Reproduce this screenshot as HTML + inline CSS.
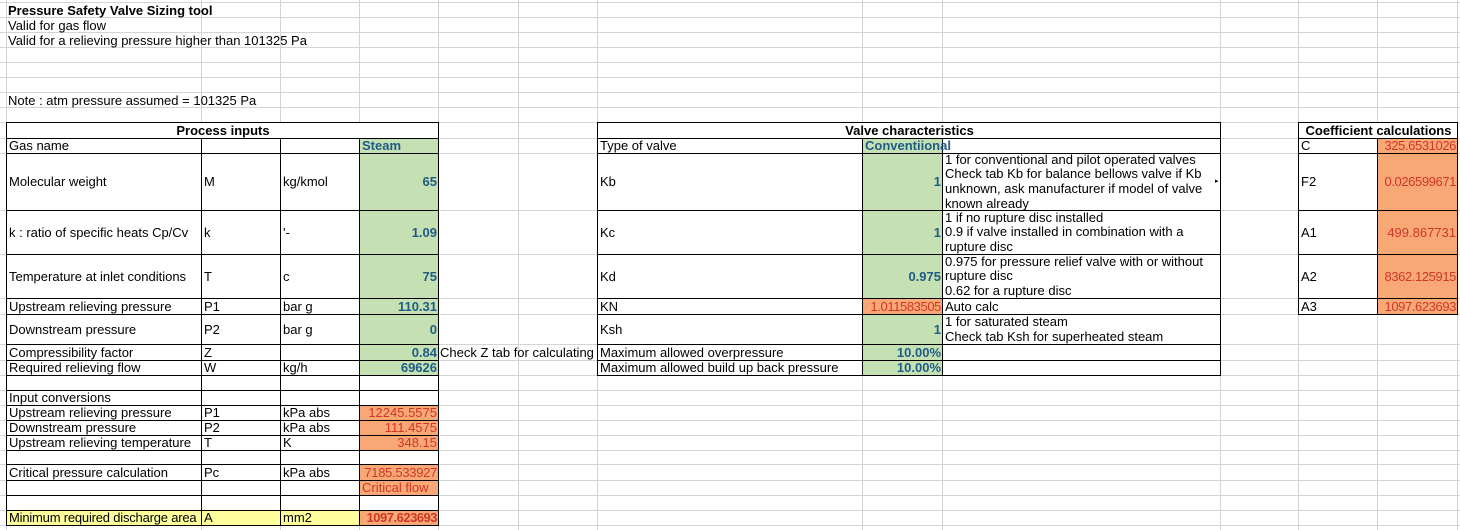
<!DOCTYPE html>
<html><head><meta charset="utf-8"><style>
*{margin:0;padding:0}
body{width:1460px;height:530px;background:#fff;position:relative;overflow:hidden;font-family:"Liberation Sans",Arial,sans-serif;font-size:13px;color:#000}
.v{position:absolute;top:0;height:530px;width:1px;background:#d4d4d4}
.h{position:absolute;left:0;width:1460px;height:1px;background:#d4d4d4}
.c{position:absolute;box-sizing:border-box;border:1px solid #000;background:#fff;display:flex;align-items:center;padding:0 1px 0 2px;white-space:nowrap;line-height:14px;overflow:hidden}
.r{justify-content:flex-end}
.m{justify-content:center;font-weight:bold}
.g{background:#c5e0b3;color:#1f5c86;font-weight:bold}
.o{background:#f7a874;color:#d0362a}
.y{background:#ffff9e}
.t{position:absolute;left:8px;white-space:nowrap;line-height:15px}
.w{line-height:14.6px}
</style></head><body>
<div class="v" style="left:6px"></div><div class="v" style="left:201px"></div><div class="v" style="left:280px"></div><div class="v" style="left:359px"></div><div class="v" style="left:438px"></div><div class="v" style="left:518px"></div><div class="v" style="left:597px"></div><div class="v" style="left:862px"></div><div class="v" style="left:942px"></div><div class="v" style="left:1220px"></div><div class="v" style="left:1298px"></div><div class="v" style="left:1377px"></div><div class="v" style="left:1457px"></div>
<div class="h" style="top:2px"></div><div class="h" style="top:17px"></div><div class="h" style="top:32px"></div><div class="h" style="top:47px"></div><div class="h" style="top:62px"></div><div class="h" style="top:77px"></div><div class="h" style="top:92px"></div><div class="h" style="top:107px"></div><div class="h" style="top:122px"></div><div class="h" style="top:138px"></div><div class="h" style="top:153px"></div><div class="h" style="top:210px"></div><div class="h" style="top:254px"></div><div class="h" style="top:298px"></div><div class="h" style="top:314px"></div><div class="h" style="top:344px"></div><div class="h" style="top:360px"></div><div class="h" style="top:375px"></div><div class="h" style="top:390px"></div><div class="h" style="top:405px"></div><div class="h" style="top:420px"></div><div class="h" style="top:435px"></div><div class="h" style="top:450px"></div><div class="h" style="top:464px"></div><div class="h" style="top:480px"></div><div class="h" style="top:495px"></div><div class="h" style="top:510px"></div><div class="h" style="top:525px"></div>

<div class="t" style="top:3px;font-weight:bold">Pressure Safety Valve Sizing tool</div>
<div class="t" style="top:18px">Valid for gas flow</div>
<div class="t" style="top:33px">Valid for a relieving pressure higher than 101325 Pa</div>
<div class="t" style="top:93px">Note : atm pressure assumed = 101325 Pa</div>
<div class="t" style="top:345px;left:440px;z-index:0">Check Z tab for calculating</div>

<!-- Process inputs -->
<div class="c m" style="left:6px;top:122px;width:433px;height:17px">Process inputs</div>
<div class="c" style="left:6px;top:138px;width:196px;height:16px">Gas name</div><div class="c" style="left:201px;top:138px;width:80px;height:16px"></div><div class="c" style="left:280px;top:138px;width:80px;height:16px"></div><div class="c g" style="left:359px;top:138px;width:80px;height:16px">Steam</div>
<div class="c" style="left:6px;top:153px;width:196px;height:58px">Molecular weight</div><div class="c" style="left:201px;top:153px;width:80px;height:58px">M</div><div class="c" style="left:280px;top:153px;width:80px;height:58px">kg/kmol</div><div class="c g r" style="left:359px;top:153px;width:80px;height:58px">65</div>
<div class="c" style="left:6px;top:210px;width:196px;height:45px">k : ratio of specific heats Cp/Cv</div><div class="c" style="left:201px;top:210px;width:80px;height:45px">k</div><div class="c" style="left:280px;top:210px;width:80px;height:45px">'-</div><div class="c g r" style="left:359px;top:210px;width:80px;height:45px">1.09</div>
<div class="c" style="left:6px;top:254px;width:196px;height:45px">Temperature at inlet conditions</div><div class="c" style="left:201px;top:254px;width:80px;height:45px">T</div><div class="c" style="left:280px;top:254px;width:80px;height:45px">c</div><div class="c g r" style="left:359px;top:254px;width:80px;height:45px">75</div>
<div class="c" style="left:6px;top:298px;width:196px;height:17px">Upstream relieving pressure</div><div class="c" style="left:201px;top:298px;width:80px;height:17px">P1</div><div class="c" style="left:280px;top:298px;width:80px;height:17px">bar g</div><div class="c g r" style="left:359px;top:298px;width:80px;height:17px">110.31</div>
<div class="c" style="left:6px;top:314px;width:196px;height:31px">Downstream pressure</div><div class="c" style="left:201px;top:314px;width:80px;height:31px">P2</div><div class="c" style="left:280px;top:314px;width:80px;height:31px">bar g</div><div class="c g r" style="left:359px;top:314px;width:80px;height:31px">0</div>
<div class="c" style="left:6px;top:344px;width:196px;height:17px">Compressibility factor</div><div class="c" style="left:201px;top:344px;width:80px;height:17px">Z</div><div class="c" style="left:280px;top:344px;width:80px;height:17px"></div><div class="c g r" style="left:359px;top:344px;width:80px;height:17px">0.84</div>
<div class="c" style="left:6px;top:360px;width:196px;height:16px">Required relieving flow</div><div class="c" style="left:201px;top:360px;width:80px;height:16px">W</div><div class="c" style="left:280px;top:360px;width:80px;height:16px">kg/h</div><div class="c g r" style="left:359px;top:360px;width:80px;height:16px">69626</div>
<div class="c" style="left:6px;top:375px;width:196px;height:16px"></div><div class="c" style="left:201px;top:375px;width:80px;height:16px"></div><div class="c" style="left:280px;top:375px;width:80px;height:16px"></div><div class="c" style="left:359px;top:375px;width:80px;height:16px"></div>
<div class="c" style="left:6px;top:390px;width:196px;height:16px">Input conversions</div><div class="c" style="left:201px;top:390px;width:80px;height:16px"></div><div class="c" style="left:280px;top:390px;width:80px;height:16px"></div><div class="c" style="left:359px;top:390px;width:80px;height:16px"></div>
<div class="c" style="left:6px;top:405px;width:196px;height:16px">Upstream relieving pressure</div><div class="c" style="left:201px;top:405px;width:80px;height:16px">P1</div><div class="c" style="left:280px;top:405px;width:80px;height:16px">kPa abs</div><div class="c o r" style="left:359px;top:405px;width:80px;height:16px">12245.5575</div>
<div class="c" style="left:6px;top:420px;width:196px;height:16px">Downstream pressure</div><div class="c" style="left:201px;top:420px;width:80px;height:16px">P2</div><div class="c" style="left:280px;top:420px;width:80px;height:16px">kPa abs</div><div class="c o r" style="left:359px;top:420px;width:80px;height:16px">111.4575</div>
<div class="c" style="left:6px;top:435px;width:196px;height:16px">Upstream relieving temperature</div><div class="c" style="left:201px;top:435px;width:80px;height:16px">T</div><div class="c" style="left:280px;top:435px;width:80px;height:16px">K</div><div class="c o r" style="left:359px;top:435px;width:80px;height:16px">348.15</div>
<div class="c" style="left:6px;top:450px;width:196px;height:15px"></div><div class="c" style="left:201px;top:450px;width:80px;height:15px"></div><div class="c" style="left:280px;top:450px;width:80px;height:15px"></div><div class="c" style="left:359px;top:450px;width:80px;height:15px"></div>
<div class="c" style="left:6px;top:464px;width:196px;height:17px">Critical pressure calculation</div><div class="c" style="left:201px;top:464px;width:80px;height:17px">Pc</div><div class="c" style="left:280px;top:464px;width:80px;height:17px">kPa abs</div><div class="c o r" style="left:359px;top:464px;width:80px;height:17px;letter-spacing:-0.3px">7185.533927</div>
<div class="c" style="left:6px;top:480px;width:196px;height:16px"></div><div class="c" style="left:201px;top:480px;width:80px;height:16px"></div><div class="c" style="left:280px;top:480px;width:80px;height:16px"></div><div class="c o" style="left:359px;top:480px;width:80px;height:16px">Critical flow</div>
<div class="c" style="left:6px;top:495px;width:196px;height:16px"></div><div class="c" style="left:201px;top:495px;width:80px;height:16px"></div><div class="c" style="left:280px;top:495px;width:80px;height:16px"></div><div class="c" style="left:359px;top:495px;width:80px;height:16px"></div>
<div class="c y" style="left:6px;top:510px;width:196px;height:16px;letter-spacing:-0.2px">Minimum required discharge area</div><div class="c y" style="left:201px;top:510px;width:80px;height:16px">A</div><div class="c y" style="left:280px;top:510px;width:80px;height:16px">mm2</div><div class="c o r" style="left:359px;top:510px;width:80px;height:16px;font-weight:bold;letter-spacing:-0.5px">1097.623693</div>

<!-- Valve characteristics -->
<div class="c m" style="left:597px;top:122px;width:624px;height:17px">Valve characteristics</div>
<div class="c" style="left:597px;top:138px;width:266px;height:16px">Type of valve</div><div class="c" style="left:942px;top:138px;width:279px;height:16px"></div><div class="c g" style="left:862px;top:138px;width:81px;height:16px;overflow:visible;z-index:2">Conventiional</div>
<div class="c" style="left:597px;top:153px;width:266px;height:58px">Kb</div><div class="c g r" style="left:862px;top:153px;width:81px;height:58px">1</div><div class="c w" style="left:942px;top:153px;width:279px;height:58px">1 for conventional and pilot operated valves<br>Check tab Kb for balance bellows valve if Kb<br>unknown, ask manufacturer if model of valve<br>known already</div>
<div class="c" style="left:597px;top:210px;width:266px;height:45px">Kc</div><div class="c g r" style="left:862px;top:210px;width:81px;height:45px">1</div><div class="c w" style="left:942px;top:210px;width:279px;height:45px">1 if no rupture disc installed<br>0.9 if valve installed in combination with a<br>rupture disc</div>
<div class="c" style="left:597px;top:254px;width:266px;height:45px">Kd</div><div class="c g r" style="left:862px;top:254px;width:81px;height:45px">0.975</div><div class="c w" style="left:942px;top:254px;width:279px;height:45px">0.975 for pressure relief valve with or without<br>rupture disc<br>0.62 for a rupture disc</div>
<div class="c" style="left:597px;top:298px;width:266px;height:17px">KN</div><div class="c o r" style="left:862px;top:298px;width:81px;height:17px;letter-spacing:-0.4px">1.011583505</div><div class="c" style="left:942px;top:298px;width:279px;height:17px">Auto calc</div>
<div class="c" style="left:597px;top:314px;width:266px;height:31px">Ksh</div><div class="c g r" style="left:862px;top:314px;width:81px;height:31px">1</div><div class="c w" style="left:942px;top:314px;width:279px;height:31px">1 for saturated steam<br>Check tab Ksh for superheated steam</div>
<div class="c" style="left:597px;top:344px;width:266px;height:17px">Maximum allowed overpressure</div><div class="c g r" style="left:862px;top:344px;width:81px;height:17px">10.00%</div><div class="c" style="left:942px;top:344px;width:279px;height:17px"></div>
<div class="c" style="left:597px;top:360px;width:266px;height:16px">Maximum allowed build up back pressure</div><div class="c g r" style="left:862px;top:360px;width:81px;height:16px">10.00%</div><div class="c" style="left:942px;top:360px;width:279px;height:16px"></div>
<div style="position:absolute;left:1215px;top:177px;font-size:7px">&#9656;</div>

<!-- Coefficient -->
<div class="c m" style="left:1298px;top:122px;width:160px;height:17px">Coefficient calculations</div>
<div class="c" style="left:1298px;top:138px;width:80px;height:16px">C</div><div class="c o r" style="left:1377px;top:138px;width:81px;height:16px;letter-spacing:-0.4px">325.6531026</div>
<div class="c" style="left:1298px;top:153px;width:80px;height:58px">F2</div><div class="c o r" style="left:1377px;top:153px;width:81px;height:58px;letter-spacing:-0.4px">0.026599671</div>
<div class="c" style="left:1298px;top:210px;width:80px;height:45px">A1</div><div class="c o r" style="left:1377px;top:210px;width:81px;height:45px">499.867731</div>
<div class="c" style="left:1298px;top:254px;width:80px;height:45px">A2</div><div class="c o r" style="left:1377px;top:254px;width:81px;height:45px;letter-spacing:-0.4px">8362.125915</div>
<div class="c" style="left:1298px;top:298px;width:80px;height:17px">A3</div><div class="c o r" style="left:1377px;top:298px;width:81px;height:17px;letter-spacing:-0.4px">1097.623693</div>
</body></html>
